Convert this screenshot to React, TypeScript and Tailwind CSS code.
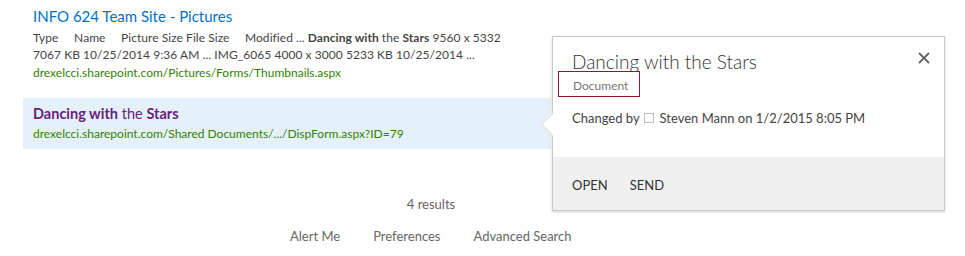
export default function App() {
  return (
    <div className="relative h-[256px] w-[965px] overflow-hidden bg-white font-['Lato',sans-serif] text-[#444]">
      <div className="flex flex-col pt-[5px]">
        {/* first result */}
        <div className="pl-[33px]">
          <div className="text-[15px] leading-[22px] text-[#0072c6]">INFO 624 Team Site - Pictures</div>
          <div className="mt-[2px] whitespace-nowrap text-[12px] leading-[17px] tracking-[0.05px] text-[#444]">
            Type&nbsp;&nbsp;&nbsp;&nbsp; Name&nbsp;&nbsp;&nbsp;&nbsp; Picture Size File Size&nbsp;&nbsp;&nbsp;&nbsp; Modified ... <b>Dancing with</b> the <b>Stars</b> 9560 x 5332
            <br />
            7067 KB 10/25/2014 9:36 AM ... IMG_6065 4000 x 3000 5233 KB 10/25/2014 ...
          </div>
          <div className="mt-[1px] text-[12px] leading-[18px] text-[#338200]">drexelcci.sharepoint.com/Pictures/Forms/Thumbnails.aspx</div>
        </div>

        {/* selected result */}
        <div className="ml-[23px] mt-[16px] h-[51px] w-[528px] bg-[#e5f1fa] pl-[10px] pt-[5px]">
          <div className="text-[14.5px] leading-[21px] text-[#68217a]">
            <b>Dancing with</b> the <b>Stars</b>
          </div>
          <div className="text-[12px] leading-[19px] text-[#338200]">drexelcci.sharepoint.com/Shared Documents/.../DispForm.aspx?ID=79</div>
        </div>

        <div className="mt-[46px] w-[862px] text-center text-[13px] leading-[18px] text-[#666]">4 results</div>
        <div className="ml-[290px] mt-[14px] flex gap-[33px] text-[13px] leading-[18px] text-[#666]">
          <span>Alert Me</span>
          <span>Preferences</span>
          <span>Advanced Search</span>
        </div>
      </div>

      {/* callout */}
      <div className="absolute left-[552px] top-[36px] flex h-[175px] w-[393px] flex-col border border-[#c8c8c8] bg-white shadow-[0_1px_3px_rgba(0,0,0,0.18)]">
        <div className="absolute left-[-8px] top-[78px] h-[19px] w-[19px] rotate-45 border-b border-l border-[#dedede] bg-white" />
        <div className="relative flex h-[120px] flex-col bg-white pl-[19px] pt-[12px]">
          <div className="text-[19px] font-light leading-[26px] text-[#333]">Dancing with the Stars</div>
          <div className="ml-[-14px] mt-[-4px] h-[26px] w-[82px] border border-[#8b1a2a] pl-[14px] pt-[6px] text-[12px] leading-[16px] text-[#777]">
            Document
          </div>
          <div className="mt-[12px] flex items-center text-[13px] leading-[18px] text-[#444]">
            Changed by
            <span className="ml-[4px] mr-[6px] inline-block h-[10px] w-[10px] border border-[#bbb]" />
            Steven Mann on 1/2/2015 8:05 PM
          </div>
          <svg className="absolute right-[14px] top-[15px]" width="12" height="12" viewBox="0 0 12 12">
            <path d="M1 1 L11 11 M11 1 L1 11" stroke="#666" strokeWidth="1.8" />
          </svg>
        </div>
        <div className="flex flex-1 items-center gap-[22px] bg-[#f0f0f0] pl-[19px] pt-[3px] text-[13px] leading-[18px] text-[#333]">
          <span>OPEN</span>
          <span>SEND</span>
        </div>
      </div>
    </div>
  );
}
